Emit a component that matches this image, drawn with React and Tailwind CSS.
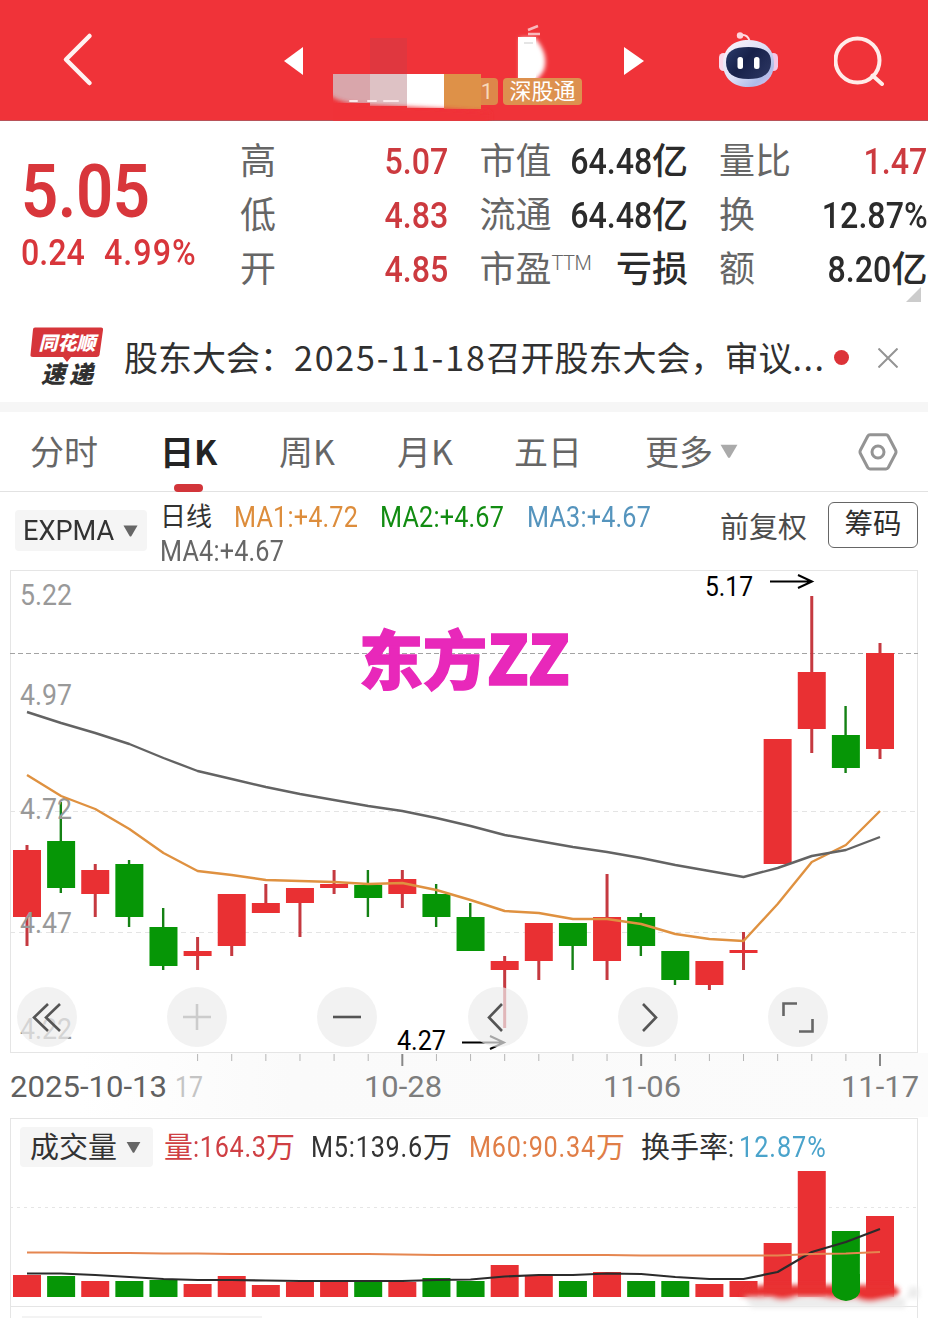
import clsx from "clsx";

const RED = "#e93033";
const GREEN = "#069606";
const STEP = 34.12;
const cx = index => 27 + index * STEP;

// [color, high, body top, body bottom, low, volume top]
const candles = [
  ["r", 845, 850, 917, 946, 1275],
  ["g", 802, 841, 888, 893, 1276],
  ["r", 864, 870, 894, 917, 1281],
  ["g", 860, 864, 917, 927, 1281],
  ["g", 908, 927, 966, 970, 1280],
  ["r", 937, 951, 956, 970, 1284],
  ["r", 894, 894, 946, 956, 1276],
  ["r", 884, 903, 913, 913, 1285],
  ["r", 888, 888, 903, 937, 1282],
  ["r", 870, 884, 888, 894, 1282],
  ["g", 870, 885, 898, 917, 1282],
  ["r", 870, 879, 894, 908, 1282],
  ["g", 884, 894, 917, 927, 1278],
  ["g", 903, 917, 951, 951, 1281],
  ["r", 956, 961, 970, 1028, 1265],
  ["r", 923, 923, 961, 980, 1275],
  ["g", 923, 923, 946, 970, 1281],
  ["r", 874, 917, 961, 980, 1272],
  ["g", 913, 917, 946, 956, 1281],
  ["g", 951, 951, 980, 985, 1281],
  ["r", 961, 961, 985, 990, 1284],
  ["r", 932, 950, 953, 970, 1281],
  ["r", 739, 739, 864, 864, 1243],
  ["r", 596, 672, 729, 753, 1171],
  ["g", 706, 735, 768, 773, 1231],
  ["r", 643, 653, 749, 759, 1216],
];

const maSlow = [
  712, 723, 733, 744, 758, 771, 779, 787, 794, 800, 806, 811, 818, 826, 835,
  841, 847, 852, 858, 865, 871, 877, 868, 856, 850, 837,
];
const maFast = [
  775, 796, 809, 829, 853, 871, 875, 880, 881, 882, 884, 883, 890, 900, 911,
  913, 919, 919, 924, 934, 939, 941, 904, 862, 845, 811,
];
const volM5 = [
  1273.5, 1273.5, 1275, 1277, 1279, 1280, 1280, 1280.5, 1281, 1281, 1281, 1281,
  1280, 1279.5, 1276.5, 1275, 1275, 1273.5, 1274, 1277, 1279, 1279, 1272, 1252,
  1242, 1229,
];
const volM60 = [
  1252.5, 1252.5, 1253, 1253, 1253.5, 1253.5, 1254, 1254, 1254, 1254, 1254,
  1254.5, 1255, 1255, 1255, 1255, 1255, 1255, 1255.5, 1255.5, 1255.5, 1255.5,
  1255.5, 1254, 1253.5, 1252,
];

const toPoints = values =>
  values.map((value, index) => `${cx(index)},${value}`).join(" ");

const Num = ({ className, children }) => (
  <span
    className={clsx(
      "inline-block shrink-0 whitespace-nowrap scale-x-[0.87]",
      className
    )}
  >
    {children}
  </span>
);

const Caret = ({ className }) => (
  <svg viewBox="0 0 16 12" className={className} fill="currentColor">
    <path d="M0.5 0h15L9 11.2q-1 1.2-2 0z" />
  </svg>
);

const Robot = () => (
  <svg width="59" height="58" viewBox="0 0 59 58">
    <defs>
      <linearGradient id="shell" x1="0" y1="0" x2="1" y2="1">
        <stop offset="0" stopColor="#fff5fb" />
        <stop offset="0.5" stopColor="#dce0f6" />
        <stop offset="0.78" stopColor="#aebce9" />
        <stop offset="1" stopColor="#e8c0ed" />
      </linearGradient>
      <linearGradient id="visor" x1="0" y1="0" x2="1" y2="0.6">
        <stop offset="0" stopColor="#2b3c6b" />
        <stop offset="0.5" stopColor="#17214a" />
        <stop offset="1" stopColor="#28325d" />
      </linearGradient>
    </defs>
    <path
      d="M21 4.500q7-2 9.500 5"
      stroke="#ffdbe4"
      strokeWidth="2"
      fill="none"
    />
    <circle cx="21" cy="4.500" r="3.200" fill="#ffd4dc" />
    <rect x="0" y="22" width="9" height="18" rx="4.500" fill="#fbd9ea" />
    <rect x="50" y="22" width="9" height="18" rx="4.500" fill="#f3c7e6" />
    <path
      d="M29.500 9C44 9 55 17 55 32.500S44 56 29.500 56 4 48 4 32.500 15 9 29.500 9z"
      fill="url(#shell)"
    />
    <path
      d="M29.500 16C44 16 52 20 52 31S45 48 29.500 48 7 42 7 31 15 16 29.500 16z"
      fill="url(#visor)"
    />
    <rect x="18.500" y="26" width="5.500" height="12" rx="2.500" fill="#fff" />
    <rect x="35" y="26" width="5.500" height="12" rx="2.500" fill="#fff" />
  </svg>
);

// Blurred out stock name and code
const MaskedTitle = () => (
  <svg
    viewBox="333 0 250 121"
    className="absolute inset-0 w-[250px] h-[121px]"
  >
    <defs>
      <filter id="soft" x="-20%" y="-20%" width="140%" height="140%">
        <feGaussianBlur stdDeviation="2.200" />
      </filter>
    </defs>
    <rect x="370" y="38" width="37" height="36" fill="#e0373f" />
    <rect x="333" y="74" width="37" height="29" fill="#d9a6ab" />
    <rect x="370" y="74" width="37" height="32" fill="#dec2c5" />
    <rect x="407" y="74" width="37" height="34" fill="#fff" />
    <rect x="444" y="74" width="37" height="35" fill="#de9148" />
    <path
      d="M326 92Q338 105 372 105L450 109 490 112V122H326z"
      fill="#f03339"
      filter="url(#soft)"
    />
    <path
      d="M350 101h7M368 101h8M384 101h14"
      stroke="#fbe9ea"
      strokeWidth="2"
      strokeLinecap="round"
    />
    <path
      d="M520 38h15q14 16 9 32-6 12-18 14h-6z"
      fill="#fff"
      filter="url(#soft)"
    />
    <path d="M518 37h18v40l-12 9h-6z" fill="#fff" />
    <path d="M528 30l10-4M528 34h12" stroke="#f8b8bb" strokeWidth="2.500" />
    <path d="M524 43h9" stroke="#ddd" strokeWidth="1.500" />
  </svg>
);

const Header = () => (
  <header className="flex items-center h-[121px] pl-[60px] bg-[#f03339] border-b border-[#b85259]">
    <svg width="36" height="56" viewBox="0 0 36 56" fill="none">
      <path
        d="M29.500 4L6 27.500l23.500 23.500"
        stroke="#fff3f2"
        strokeWidth="4.500"
        strokeLinecap="round"
        strokeLinejoin="round"
      />
    </svg>
    <svg width="19" height="30" viewBox="0 0 19 30" className="ml-[188px]">
      <path d="M19 2v28L0 16z" fill="#fff" />
    </svg>
    <div className="relative flex items-end w-[250px] h-[121px] ml-[30px] pl-[148px] pb-[16px] gap-[5px] text-white">
      <MaskedTitle />
      <span className="relative flex items-center justify-end w-[17px] h-[27px] pr-[5px] rounded-r-sm bg-[#dd874a] text-[22px] text-[#f8d8b8]">
        1
      </span>
      <span className="relative flex items-center justify-center w-[79px] h-[27px] rounded-sm bg-[#dd914f] text-[22px] leading-[27px] whitespace-nowrap">
        深股通
      </span>
    </div>
    <svg width="20" height="30" viewBox="0 0 20 30" className="ml-[41px]">
      <path d="M0 2v28l20-14z" fill="#fff" />
    </svg>
    <div className="ml-[75px]">
      <Robot />
    </div>
    <svg
      width="50"
      height="52"
      viewBox="0 0 50 52"
      fill="none"
      stroke="#ffece9"
      strokeWidth="4"
      className="ml-[56px]"
    >
      <circle cx="23.500" cy="26.500" r="22" />
      <path d="M38.500 41.500L48 50" strokeLinecap="round" />
    </svg>
  </header>
);

const quoteColumns = [
  [
    { label: "高", value: "5.07", up: true },
    { label: "低", value: "4.83", up: true },
    { label: "开", value: "4.85", up: true },
  ],
  [
    { label: "市值", value: "64.48", unit: "亿" },
    { label: "流通", value: "64.48", unit: "亿" },
    { label: "市盈", sup: "TTM", unit: "亏损" },
  ],
  [
    { label: "量比", value: "1.47", up: true },
    { label: "换", value: "12.87%" },
    { label: "额", value: "8.20", unit: "亿" },
  ],
];

const Quote = () => (
  <section className="relative flex h-[189px] pt-[14px]">
    <div className="w-[240px] pl-[21px] text-[#d8363b] font-medium">
      <Num className="block origin-left h-[74px] mt-[19px] text-[75px] leading-[74px] font-semibold tracking-[-0.500px]">
        5.05
      </Num>
      <div className="flex text-[37px] leading-[50px]">
        <Num className="origin-left w-[83px]">0.24</Num>
        <Num className="origin-left tracking-[1.200px]">4.99%</Num>
      </div>
    </div>
    <div className="flex gap-[31px]">
      {quoteColumns.map((rows, index) => (
        <div key={index} className="w-[208.500px]">
          {rows.map(({ label, sup, value, unit, up }) => (
            <div
              key={label}
              className={clsx(
                "flex items-center justify-between h-[54px] text-[36px] leading-[54px]",
                up ? "text-[#cc3a3f]" : "text-[#2b2b2b]"
              )}
            >
              <span className="flex text-[#666]">
                {label}
                {sup && (
                  <span className="text-[20px] leading-[41px] font-light tracking-[-0.500px]">
                    {sup}
                  </span>
                )}
              </span>
              <span className="flex items-center font-medium">
                {value && (
                  <Num className="origin-right text-[37px]">{value}</Num>
                )}
                {unit && <span>{unit}</span>}
              </span>
            </div>
          ))}
        </div>
      ))}
    </div>
    <svg
      viewBox="0 0 15 15"
      className="absolute right-[7px] bottom-[8px] size-[15px]"
    >
      <path d="M15 0v15H0z" fill="#ccc" />
    </svg>
  </section>
);

const Notice = () => (
  <section className="flex items-center h-[92px] pl-[29px] text-[#303030]">
    <div className="relative w-[76px] h-[62px] italic font-black">
      <svg viewBox="0 0 76 62" className="absolute inset-0">
        <path
          d="M6 2.500h66q2.500 0 2 2.500l-3.500 25q-.5 2-3 2H42l-4 5-4-5H4q-3 0-2.500-2.500L4 4.500Q4 2.500 6 2.500z"
          fill="#d6353a"
        />
      </svg>
      <div className="relative flex justify-center h-[36px] text-[19px] leading-[38px] text-white">
        同花顺
      </div>
      <div className="relative flex justify-center gap-[4px] text-[24px] leading-[28px]">
        <span>速</span>
        <span>递</span>
      </div>
    </div>
    <p className="relative w-[703px] ml-[19px] font-[Noto_Sans_CJK_SC,sans-serif] text-[34px] whitespace-nowrap">
      股东大会：
      <span className="tracking-[1.800px]">2025-11-18</span>
      召开股东大会，审议
      <span className="tracking-[1.500px]">...</span>
    </p>
    <span className="relative top-px size-[15px] ml-[7px] rounded-full bg-[#dc3338]" />
    <svg
      viewBox="0 0 20 20"
      className="relative top-[2px] size-[20px] ml-[29px]"
      stroke="#949494"
      strokeWidth="2"
    >
      <path d="M0.500 0.500l19 19M19.500 0.500l-19 19" />
    </svg>
  </section>
);

const tabs = [
  { label: "分时", width: "w-[130px]" },
  { label: "日K", width: "w-[119px]", active: true },
  { label: "周K", width: "w-[118px]" },
  { label: "月K", width: "w-[117px]" },
  { label: "五日", width: "w-[131px]" },
  { label: "更多", width: "w-[75px]" },
];

const Tabs = () => (
  <nav className="flex items-center h-[80px] pl-[30px] border-b border-[#e2e2e2] font-[Noto_Sans_CJK_SC,sans-serif] text-[34px] text-[#666]">
    {tabs.map(({ label, width, active }) => (
      <div
        key={label}
        className={clsx(
          "relative shrink-0 h-[80px] leading-[78px]",
          width,
          active && "font-bold text-[#242424]"
        )}
      >
        {label}
        {active && (
          <span className="absolute left-[14px] bottom-0 w-[29px] h-[8px] rounded-full bg-[#d2353a]" />
        )}
      </div>
    ))}
    <Caret className="w-[18px] h-[15px] text-[#aaa]" />
    <svg
      viewBox="0 0 40 38"
      className="w-[40px] h-[38px] ml-[120px]"
      fill="none"
      stroke="#949494"
      strokeWidth="3"
    >
      <path
        d="M12 1.800h16q1.500 0 2.300 1.400L37.500 17q1 1.900 0 3.800L30.300 34.500q-.8 1.400-2.300 1.400H12q-1.500 0-2.300-1.400L2.500 20.800q-1-1.900 0-3.800L9.700 3.200Q10.500 1.800 12 1.800z"
        strokeLinejoin="round"
      />
      <circle cx="20" cy="19" r="6" />
    </svg>
  </nav>
);

const Indicators = () => (
  <div className="flex h-[78px] pl-[15px]">
    <div className="flex items-center w-[132px] h-[41px] mt-[18px] pl-[8px] rounded-sm bg-[#f5f5f5] text-[28px] text-[#333]">
      <Num className="origin-left w-[100px] scale-x-[0.97]">EXPMA</Num>
      <Caret className="w-[15px] h-[12px] text-[#666]" />
    </div>
    <div className="w-[560px] ml-[13px] pt-[8px] text-[29px] leading-[34px]">
      <div className="flex h-[34px]">
        <span className="w-[74px] text-[26px] text-[#333]">日线</span>
        <Num className="origin-left w-[146px] tracking-[0.200px] text-[#dd8d3c]">
          MA1:+4.72
        </Num>
        <Num className="origin-left w-[147px] tracking-[0.200px] text-[#128c12]">
          MA2:+4.67
        </Num>
        <Num className="origin-left tracking-[0.200px] text-[#5594bd]">
          MA3:+4.67
        </Num>
      </div>
      <Num className="origin-left tracking-[0.200px] text-[#666]">
        MA4:+4.67
      </Num>
    </div>
    <span className="mt-[15px] w-[108px] text-[29px] leading-[42px] text-[#4c4c4c]">
      前复权
    </span>
    <button className="w-[90px] h-[46px] mt-[10px] rounded-md border border-[#666] text-[28.500px] leading-[44px] text-[#2e2e2e] whitespace-nowrap">
      筹码
    </button>
  </div>
);

const axisLabels = [
  ["5.22", 605],
  ["4.97", 705],
  ["4.72", 819],
  ["4.47", 933],
  ["4.22", 1039],
];

const controls = [
  { name: "first", color: "#555", d: "M31 17L17 30.500 31 44M43 17L29 30.500 43 44" },
  { name: "zoom in", color: "#ccc", d: "M16 30h28M30 17v26" },
  { name: "zoom out", color: "#555", d: "M16 30h28" },
  { name: "previous", color: "#555", d: "M34 17L21 30.500 34 44" },
  { name: "next", color: "#555", d: "M25 17l13 13.500L25 44" },
  { name: "fullscreen", color: "#666", d: "M15.500 29V16.500H29M31 44.500h13.500V32" },
];

const Candle = ({ index, data }) => {
  const [color, high, top, bottom, low] = data;
  const x = cx(index);
  return (
    <g fill={color === "r" ? RED : GREEN}>
      <rect
        x={x - 1.5}
        y={high}
        width={color === "r" ? 3 : 2.4}
        height={low - high}
        fill={color === "r" ? "#c53940" : "#148114"}
      />
      <rect x={x - 14} y={top} width="28" height={bottom - top} />
    </g>
  );
};

const PriceChart = () => (
  <div className="relative h-[548px]">
    <svg
      viewBox="0 570 928 548"
      className="block w-[928px] h-[548px] font-[Roboto,sans-serif]"
    >
      <defs>
        <linearGradient id="fade" x1="0" y1="0" x2="1" y2="0">
          <stop offset="0" stopColor="#fff" />
          <stop offset="0.250" stopColor="#fafafa" />
          <stop offset="1" stopColor="#fbfbfb" />
        </linearGradient>
      </defs>
      <rect x="80" y="1053" width="848" height="64" fill="url(#fade)" />
      <rect
        x="10.500"
        y="570.500"
        width="907"
        height="482"
        fill="#fff"
        stroke="#e5e5e5"
      />
      <g fill="none" strokeWidth="1">
        <path d="M10 811.500H918M10 932.500H918" stroke="#e4e4e4" strokeDasharray="5 4" />
        <path d="M10 653.500H918" stroke="#a3a3a3" strokeDasharray="5 3" />
      </g>
      {candles.map((data, index) => (
        <Candle key={index} index={index} data={data} />
      ))}
      <g fontSize="30" fill="#999">
        {axisLabels.map(([label, y]) => (
          <text
            key={label}
            x="20"
            y={y}
            textLength="52"
            lengthAdjust="spacingAndGlyphs"
          >
            {label}
          </text>
        ))}
      </g>
      <g fill="none" strokeWidth="2.400" strokeLinejoin="round">
        <polyline points={toPoints(maFast)} stroke="#df9140" />
        <polyline points={toPoints(maSlow)} stroke="#636363" />
      </g>
      <g fill="none" stroke="#000" strokeWidth="2">
        <path d="M770 581.500h41M798 575l14 6.500-14 6.500" />
        <path d="M462 1042.500h42M490 1036l14 6.500-14 6.500" />
      </g>
      <g fontSize="27" fill="#000">
        <text x="705" y="596" textLength="48" lengthAdjust="spacingAndGlyphs">
          5.17
        </text>
        <text x="397" y="1050" textLength="49" lengthAdjust="spacingAndGlyphs">
          4.27
        </text>
      </g>
      <g
        fill="#e828ba"
        stroke="#e828ba"
        strokeWidth="1.500"
        fontWeight="900"
        className="font-[Noto_Sans_CJK_SC,sans-serif]"
      >
        <text
          x="359"
          y="684"
          fontSize="64"
          textLength="128"
          lengthAdjust="spacingAndGlyphs"
        >
          东方
        </text>
        <text
          x="487"
          y="685"
          fontSize="69"
          textLength="83"
          lengthAdjust="spacingAndGlyphs"
        >
          ZZ
        </text>
      </g>
      {candles.map((_, index) => {
        if (index < 5) return null;
        const major = [11, 18, 25].includes(index);
        return (
          <rect
            key={index}
            x={cx(index) - (major ? 1 : 0.5)}
            y="1054"
            width={major ? 2 : 1}
            height={major ? 12 : 7}
            fill={major ? "#888" : "#b5b5b5"}
          />
        );
      })}
      <g fontSize="29" fill="#7d7d7d">
        <text
          x="10"
          y="1097"
          textLength="157"
          lengthAdjust="spacingAndGlyphs"
          fill="#606060"
        >
          2025-10-13
        </text>
        <text
          x="175"
          y="1097"
          textLength="28"
          lengthAdjust="spacingAndGlyphs"
          fill="#c4c4c4"
        >
          17
        </text>
        <text x="364" y="1097" textLength="78" lengthAdjust="spacingAndGlyphs">
          10-28
        </text>
        <text x="603" y="1097" textLength="78" lengthAdjust="spacingAndGlyphs">
          11-06
        </text>
        <text x="841" y="1097" textLength="78" lengthAdjust="spacingAndGlyphs">
          11-17
        </text>
      </g>
    </svg>
    <div className="absolute left-[17px] top-[417px] flex gap-[90.200px]">
      {controls.map(({ name, color, d }) => (
        <button
          key={name}
          aria-label={name}
          className="size-[60px] rounded-full bg-[#ececec]/70"
        >
          <svg
            viewBox="0 0 60 60"
            fill="none"
            stroke={color}
            strokeWidth="2.600"
          >
            <path d={d} />
          </svg>
        </button>
      ))}
    </div>
  </div>
);

const VolumeHeader = () => (
  <div className="absolute left-[20px] top-[9px] flex items-center h-[40px] text-[29px] leading-[40px] text-[#333] whitespace-nowrap">
    <div className="flex items-center w-[133px] h-[40px] pl-[10px] rounded-sm bg-[#f5f5f5]">
      <span className="relative top-px w-[96px]">成交量</span>
      <Caret className="w-[15px] h-[11px] text-[#666]" />
    </div>
    <div className="flex w-[147px] ml-[11px] text-[#cf3f43]">
      <span className="relative top-px">量</span>
      <Num className="origin-left w-[73px] tracking-[0.800px]">:164.3</Num>
      <span className="relative top-px">万</span>
    </div>
    <div className="flex w-[158px]">
      <Num className="origin-left w-[112px] tracking-[0.900px]">M5:139.6</Num>
      <span className="relative top-px">万</span>
    </div>
    <div className="flex w-[172px] text-[#e07e47]">
      <Num className="origin-left w-[127px] tracking-[0.900px]">M60:90.34</Num>
      <span className="relative top-px">万</span>
    </div>
    <div className="flex">
      <span className="relative top-px">换手率</span>
      <Num className="origin-left w-[11px]">:</Num>
      <Num className="origin-left tracking-[1.100px] text-[#4aa3cb]">
        12.87%
      </Num>
    </div>
  </div>
);

const VolumeChart = () => (
  <div className="relative h-[200px]">
    <svg viewBox="0 1118 928 200" className="block w-[928px] h-[200px]">
      <defs>
        <filter id="smudge" x="-20%" y="-50%" width="140%" height="200%">
          <feGaussianBlur stdDeviation="2.500" />
        </filter>
      </defs>
      <g fill="none" stroke="#e5e5e5">
        <rect x="10.500" y="1118.500" width="907" height="188" />
        <path d="M10.500 1306V1318M917.500 1306V1318" />
        <path d="M10 1207.500H918" strokeDasharray="3 4" />
      </g>
      <rect x="22" y="1316" width="240" height="2" fill="#f3f3f3" />
      {candles.map((data, index) => (
        <rect
          key={index}
          x={cx(index) - 14}
          y={data[5]}
          width="28"
          height={1297 - data[5]}
          fill={data[0] === "r" ? RED : GREEN}
        />
      ))}
      <g filter="url(#smudge)">
        <path d="M745 1298h174v-10l-8-2-6 14v8H752z" fill="#ececec" />
        <path
          d="M750 1287l14-2h128q10 5 6 10-8 4-18 5-14 4-24-2-22 2-34-1-16-2-26 0-14 6-26 0-14 2-30-1z"
          fill={RED}
        />
      </g>
      <path d="M832 1274h28v18q-3 8-14 9-11-1-14-9z" fill={GREEN} />
      <g fill="none" strokeWidth="2.200" strokeLinejoin="round">
        <polyline points={toPoints(volM5)} stroke="#2b2b2b" />
        <polyline points={toPoints(volM60)} stroke="#e58650" />
      </g>
    </svg>
    <VolumeHeader />
  </div>
);

const App = () => (
  <main className="w-[928px] h-[1318px] overflow-hidden bg-white font-[Roboto,Noto_Sans_CJK_SC,sans-serif]">
    <Header />
    <Quote />
    <Notice />
    <div className="h-[10px] bg-[#f6f6f6]" />
    <Tabs />
    <Indicators />
    <PriceChart />
    <VolumeChart />
  </main>
);

export default App;
